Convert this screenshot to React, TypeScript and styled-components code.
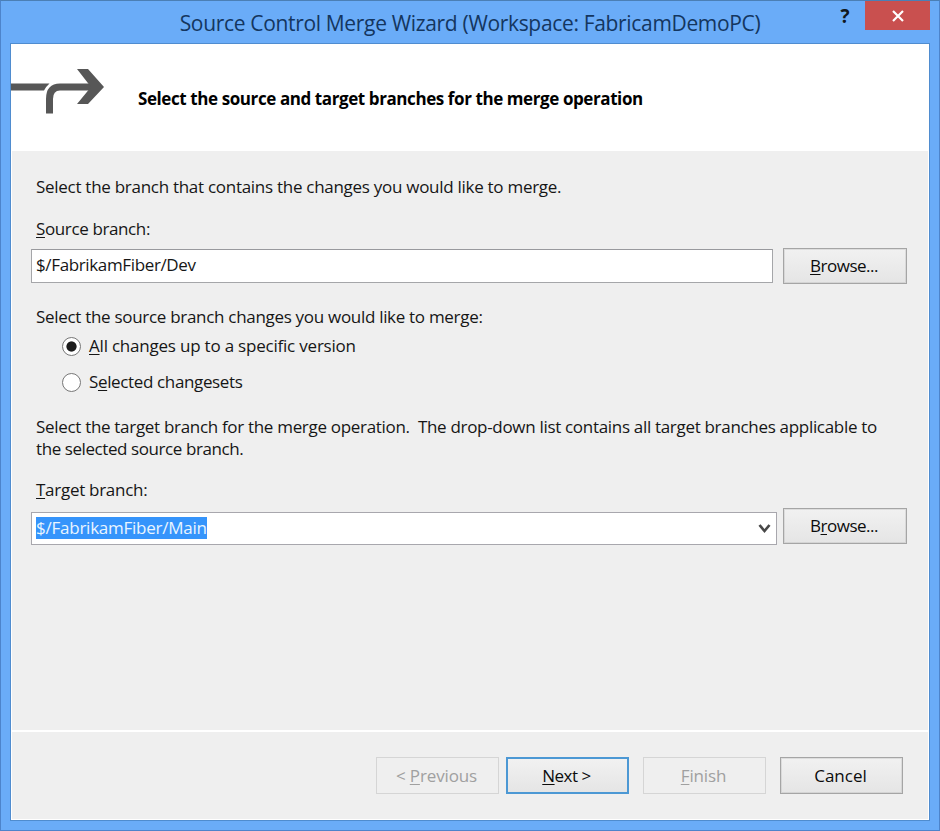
import React from "react";
import styled, { createGlobalStyle } from "styled-components";

const GlobalStyle = createGlobalStyle`
  * { box-sizing: border-box; }
  body {
    margin: 0;
    font-family: "Open Sans", "Noto Sans", sans-serif;
    font-size: 17px;
    line-height: 22px;
    color: #161616;
  }
`;

const Window = styled.div`
  display: flex;
  flex-direction: column;
  width: 940px;
  height: 831px;
  padding: 0 9px 9px;
  background: #6aacf8;
  border: 1px solid #4d84cb;
  border-top-color: #4b7fb5;
`;

const TitleBar = styled.header`
  display: grid;
  grid-template-columns: 1fr auto 1fr;
  height: 42px;
  flex: none;
`;

const Title = styled.h1`
  grid-column: 2;
  margin: 0;
  padding-top: 7px;
  font-size: 21px;
  font-weight: 400;
  line-height: 30px;
  letter-spacing: -0.33px;
  white-space: nowrap;
  color: #14365f;
`;

const WindowControls = styled.div`
  display: flex;
  justify-content: flex-end;
  align-items: flex-start;
`;

const HelpButton = styled.button`
  display: flex;
  justify-content: center;
  width: 40px;
  height: 29px;
  padding: 3px 0 0;
  border: 0;
  background: none;
  font: 700 19px/24px "Open Sans", sans-serif;
  color: #101820;
`;

const CloseButton = styled.button`
  display: flex;
  align-items: center;
  justify-content: center;
  width: 65px;
  height: 29px;
  padding: 0;
  border: 0;
  background: #c9504f;
`;

const Client = styled.main`
  display: flex;
  flex-direction: column;
  flex: 1;
  border: 1px solid #4f8ccf;
  background: #fff;
`;

const Banner = styled.section`
  display: flex;
  height: 107px;
  flex: none;
`;

const MergeIcon = styled.svg`
  display: block;
  width: 95px;
  height: 48px;
  margin-top: 24px;
`;

const BannerTitle = styled.h2`
  margin: 44px 0 0 32px;
  font-size: 17px;
  font-weight: 700;
  line-height: 22px;
  letter-spacing: -0.41px;
  color: #000;
`;

const Page = styled.section`
  display: flex;
  flex-direction: column;
  flex: 1;
  margin: 0 1px;
  padding: 25px 21px 0 19px;
  background: #efefef;
`;

const Text = styled.p<{ $spacing?: number; $gap?: number }>`
  margin: ${(p) => p.$gap ?? 0}px 0 0 5px;
  letter-spacing: ${(p) => p.$spacing ?? -0.28}px;
  white-space: pre;
`;

const Field = styled.div<{ $gap: number; $space: number }>`
  display: flex;
  align-items: flex-start;
  justify-content: space-between;
  margin-top: ${(p) => p.$gap}px;
  margin-bottom: ${(p) => p.$space}px;
`;

const TextBox = styled.div`
  width: 742px;
  height: 34px;
  margin-top: 1px;
  padding: 4px 4px;
  border: 1px solid #a5a6a9;
  border-top-color: #98999d;
  background: #fff;
  letter-spacing: -0.36px;
`;

const ComboBox = styled.div`
  display: flex;
  justify-content: space-between;
  align-items: center;
  width: 746px;
  height: 33px;
  margin-top: 4px;
  padding: 0 5px 1px 4px;
  border: 1px solid #a8a7ad;
  background: #fff;
`;

const Selection = styled.span`
  height: 22px;
  background: #3594fb;
  color: #e9f5ff;
  letter-spacing: -0.24px;
  line-height: 22px;
`;

const Button = styled.button<{ $variant?: "primary" | "disabled"; $spacing?: number; $browse?: boolean }>`
  width: ${(p) => (p.$browse ? 124 : 123)}px;
  height: ${(p) => (p.$browse ? 36 : 37)}px;
  padding: 0 2px 0 0;
  border: ${(p) => (p.$variant === "primary" ? "2px solid #4c98d4" : p.$variant === "disabled" ? "1px solid #d5d5d5" : "1px solid #a5a5a5")};
  background: ${(p) => (p.$variant === "disabled" ? "#efefef" : "linear-gradient(#f1f1f1, #e5e5e5)")};
  box-shadow: ${(p) => (p.$variant ? "none" : "inset 0 0 0 1px rgba(165, 165, 165, 0.25)")};
  color: ${(p) => (p.$variant === "disabled" ? "#a0a0a0" : "#0c0c0c")};
  font: inherit;
  letter-spacing: ${(p) => p.$spacing ?? 0}px;
`;

const Key = styled.span`
  text-decoration: underline;
  text-decoration-thickness: 1px;
  text-underline-offset: 2px;
  text-decoration-skip-ink: none;
`;

const Option = styled.label<{ $gap: number; $spacing: number }>`
  display: flex;
  align-items: center;
  gap: 8px;
  height: 22px;
  margin: ${(p) => p.$gap}px 0 0 31px;
  letter-spacing: ${(p) => p.$spacing}px;
`;

const RadioMark = styled.span<{ $checked?: boolean }>`
  width: 19px;
  height: 19px;
  border: 1.5px solid #777;
  border-radius: 50%;
  background: ${(p) => (p.$checked ? "radial-gradient(circle, #1d1d1d 4.7px, #fff 5.5px)" : "#fff")};
`;

const Footer = styled.footer`
  display: flex;
  justify-content: flex-end;
  align-items: flex-start;
  height: 87px;
  flex: none;
  margin: 2px 1px 1px;
  padding: 25px 25px 0 0;
  background: #efefef;
`;

const NavButtons = styled.div`
  display: flex;
  gap: 7px;
  margin-right: 14px;
`;

const EndButtons = styled.div`
  display: flex;
  gap: 14px;
`;

export default function App() {
  return (
    <>
      <GlobalStyle />
      <Window>
        <TitleBar>
          <Title>Source Control Merge Wizard (Workspace: FabricamDemoPC)</Title>
          <WindowControls>
            <HelpButton aria-label="Help">?</HelpButton>
            <CloseButton aria-label="Close">
              <svg width="12" height="12" viewBox="0 0 12 12">
                <path d="M1 1 11 11M11 1 1 11" stroke="#fff" strokeWidth="2.2" />
              </svg>
            </CloseButton>
          </WindowControls>
        </TitleBar>
        <Client>
          <Banner>
            <MergeIcon viewBox="0 0 95 48">
              <path d="M0 15.5H38.500Q35 18.500 33 22.500H0Z" fill="#575757" />
              <path d="M38.5 45.5V31Q38.5 19 49 19H84" fill="none" stroke="#575757" strokeWidth="7" />
              <path d="M66 1H77L93 19 77 36H66L80 19Z" fill="#575757" />
            </MergeIcon>
            <BannerTitle>Select the source and target branches for the merge operation</BannerTitle>
          </Banner>
          <Page>
            <Text>Select the branch that contains the changes you would like to merge.</Text>
            <Text $gap={20} $spacing={-0.38}><Key>S</Key>ource branch:</Text>
            <Field $gap={8} $space={22}>
              <TextBox>$/FabrikamFiber/Dev</TextBox>
              <Button $browse $spacing={-0.5}><Key>B</Key>rowse...</Button>
            </Field>
            <Text $spacing={-0.3}>Select the source branch changes you would like to merge:</Text>
            <Option $gap={7} $spacing={-0.21}>
              <RadioMark $checked />
              <span><Key>A</Key>ll changes up to a specific version</span>
            </Option>
            <Option $gap={14} $spacing={-0.36}>
              <RadioMark />
              <span>S<Key>e</Key>lected changesets</span>
            </Option>
            <Text $gap={23} $spacing={-0.31}>
              {"Select the target branch for the merge operation.  The drop-down list contains all target branches applicable to"}
            </Text>
            <Text $spacing={-0.42}>the selected source branch.</Text>
            <Text $gap={19} $spacing={-0.28}><Key>T</Key>arget branch:</Text>
            <Field $gap={7} $space={0}>
              <ComboBox>
                <Selection>$/FabrikamFiber/Main</Selection>
                <svg width="13" height="11" viewBox="0 0 13 11">
                  <path d="M1.500 2 6.500 8 11.500 2" fill="none" stroke="#484848" strokeWidth="2.7" />
                </svg>
              </ComboBox>
              <Button $browse $spacing={-0.5}>B<Key>r</Key>owse...</Button>
            </Field>
          </Page>
          <Footer>
            <NavButtons>
              <Button $variant="disabled" $spacing={-0.12}>&lt; <Key>P</Key>revious</Button>
              <Button $variant="primary" $spacing={-0.5}><Key>N</Key>ext &gt;</Button>
            </NavButtons>
            <EndButtons>
              <Button $variant="disabled" $spacing={-0.15}><Key>F</Key>inish</Button>
              <Button>Cancel</Button>
            </EndButtons>
          </Footer>
        </Client>
      </Window>
    </>
  );
}
